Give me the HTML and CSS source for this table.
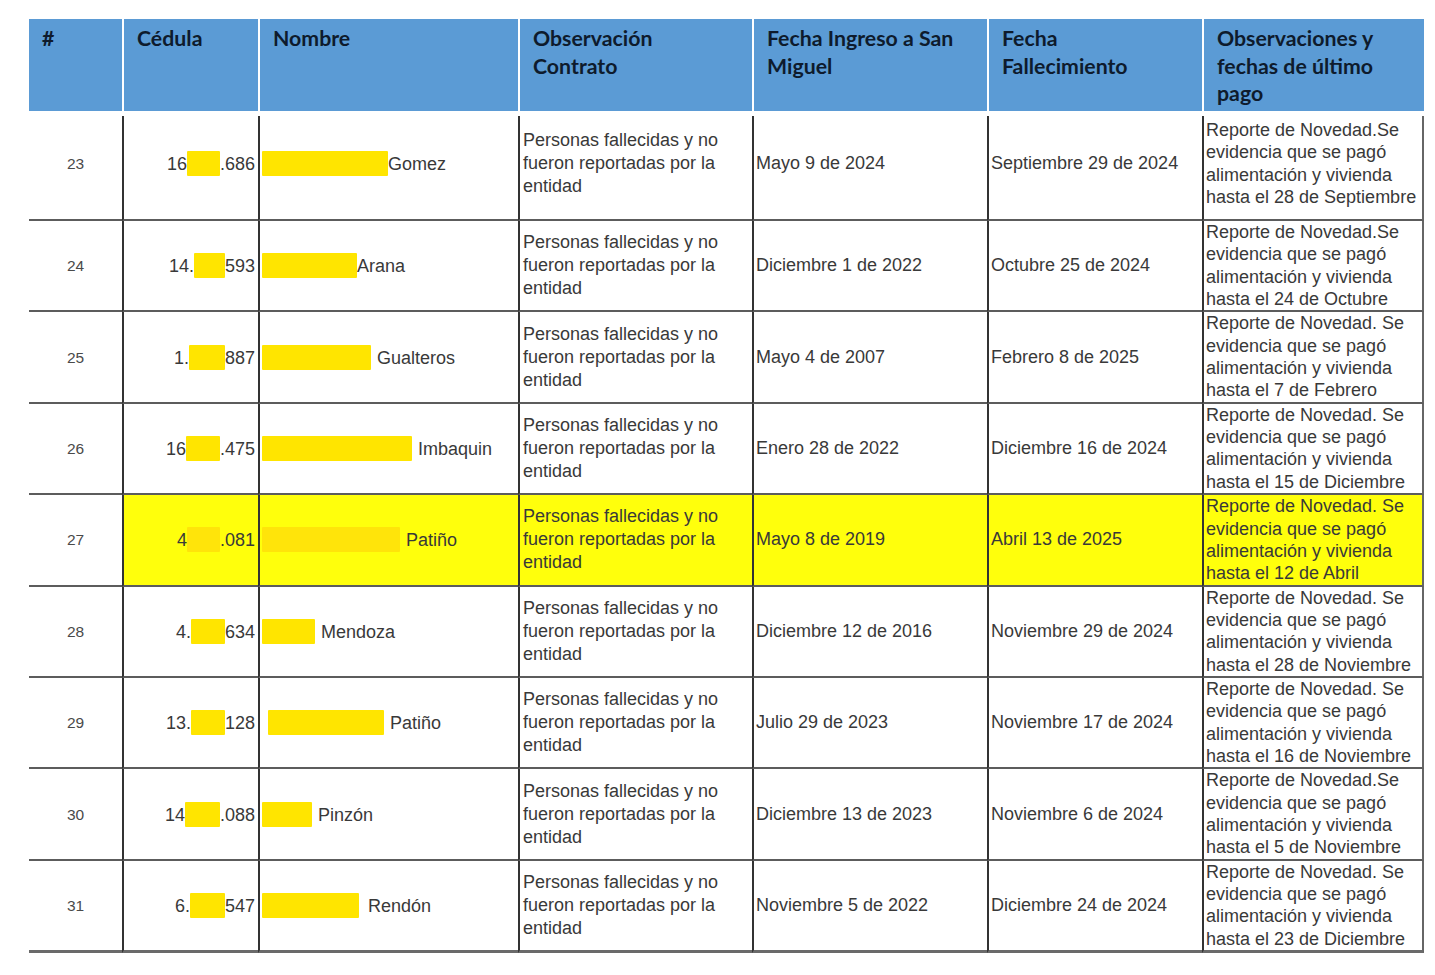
FILE: index.html
```html
<!DOCTYPE html>
<html lang="es">
<head>
    <meta charset="UTF-8">
    <title>Reporte de novedades</title>
    <link rel="stylesheet" href="styles.css">
</head>
<body>
<div class="reportPage">
    <table class="reportTable">
        <colgroup>
            <col class="colNum">
            <col class="colCedula">
            <col class="colNombre">
            <col class="colObs">
            <col class="colIngreso">
            <col class="colFallece">
            <col class="colNota">
        </colgroup>
        <thead>
        <tr>
            <th>#</th>
            <th>Cédula</th>
            <th>Nombre</th>
            <th>Observación<br>Contrato</th>
            <th>Fecha Ingreso a San<br>Miguel</th>
            <th>Fecha<br>Fallecimiento</th>
            <th>Observaciones y<br>fechas de último<br>pago</th>
        </tr>
        </thead>
        <tbody>
        <tr class="firstRow">
            <td class="num">23</td>
            <td class="cedula">16<span class="redact" style="width:33px"></span>.686</td>
            <td class="nombre"><span class="redact" style="width:126px"></span>Gomez</td>
            <td class="obs">Personas fallecidas y no<br>fueron reportadas por la<br>entidad</td>
            <td class="fecha">Mayo 9 de 2024</td>
            <td class="fecha">Septiembre 29 de 2024</td>
            <td class="nota">Reporte de Novedad.Se<br>evidencia que se pagó<br>alimentación y vivienda<br>hasta el 28 de Septiembre</td>
        </tr>
        <tr>
            <td class="num">24</td>
            <td class="cedula">14.<span class="redact" style="width:31px"></span>593</td>
            <td class="nombre"><span class="redact" style="width:95px"></span>Arana</td>
            <td class="obs">Personas fallecidas y no<br>fueron reportadas por la<br>entidad</td>
            <td class="fecha">Diciembre 1 de 2022</td>
            <td class="fecha">Octubre 25 de 2024</td>
            <td class="nota">Reporte de Novedad.Se<br>evidencia que se pagó<br>alimentación y vivienda<br>hasta el 24 de Octubre</td>
        </tr>
        <tr>
            <td class="num">25</td>
            <td class="cedula">1.<span class="redact" style="width:36px"></span>887</td>
            <td class="nombre"><span class="redact gap" style="width:109px"></span>Gualteros</td>
            <td class="obs">Personas fallecidas y no<br>fueron reportadas por la<br>entidad</td>
            <td class="fecha">Mayo 4 de 2007</td>
            <td class="fecha">Febrero 8 de 2025</td>
            <td class="nota">Reporte de Novedad. Se<br>evidencia que se pagó<br>alimentación y vivienda<br>hasta el 7 de Febrero</td>
        </tr>
        <tr>
            <td class="num">26</td>
            <td class="cedula">16<span class="redact" style="width:34px"></span>.475</td>
            <td class="nombre"><span class="redact gap" style="width:150px"></span>Imbaquin</td>
            <td class="obs">Personas fallecidas y no<br>fueron reportadas por la<br>entidad</td>
            <td class="fecha">Enero 28 de 2022</td>
            <td class="fecha">Diciembre 16 de 2024</td>
            <td class="nota">Reporte de Novedad. Se<br>evidencia que se pagó<br>alimentación y vivienda<br>hasta el 15 de Diciembre</td>
        </tr>
        <tr class="marked">
            <td class="num">27</td>
            <td class="cedula">4<span class="redact" style="width:33px"></span>.081</td>
            <td class="nombre"><span class="redact gap" style="width:138px"></span>Patiño</td>
            <td class="obs">Personas fallecidas y no<br>fueron reportadas por la<br>entidad</td>
            <td class="fecha">Mayo 8 de 2019</td>
            <td class="fecha">Abril 13 de 2025</td>
            <td class="nota">Reporte de Novedad. Se<br>evidencia que se pagó<br>alimentación y vivienda<br>hasta el 12 de Abril</td>
        </tr>
        <tr>
            <td class="num">28</td>
            <td class="cedula">4.<span class="redact" style="width:34px"></span>634</td>
            <td class="nombre"><span class="redact gap" style="width:53px"></span>Mendoza</td>
            <td class="obs">Personas fallecidas y no<br>fueron reportadas por la<br>entidad</td>
            <td class="fecha">Diciembre 12 de 2016</td>
            <td class="fecha">Noviembre 29 de 2024</td>
            <td class="nota">Reporte de Novedad. Se<br>evidencia que se pagó<br>alimentación y vivienda<br>hasta el 28 de Noviembre</td>
        </tr>
        <tr>
            <td class="num">29</td>
            <td class="cedula">13.<span class="redact" style="width:34px"></span>128</td>
            <td class="nombre"><span class="redact gap indent" style="width:116px"></span>Patiño</td>
            <td class="obs">Personas fallecidas y no<br>fueron reportadas por la<br>entidad</td>
            <td class="fecha">Julio 29 de 2023</td>
            <td class="fecha">Noviembre 17 de 2024</td>
            <td class="nota">Reporte de Novedad. Se<br>evidencia que se pagó<br>alimentación y vivienda<br>hasta el 16 de Noviembre</td>
        </tr>
        <tr>
            <td class="num">30</td>
            <td class="cedula">14<span class="redact" style="width:35px"></span>.088</td>
            <td class="nombre"><span class="redact gap" style="width:50px"></span>Pinzón</td>
            <td class="obs">Personas fallecidas y no<br>fueron reportadas por la<br>entidad</td>
            <td class="fecha">Diciembre 13 de 2023</td>
            <td class="fecha">Noviembre 6 de 2024</td>
            <td class="nota">Reporte de Novedad.Se<br>evidencia que se pagó<br>alimentación y vivienda<br>hasta el 5 de Noviembre</td>
        </tr>
        <tr class="lastRow">
            <td class="num">31</td>
            <td class="cedula">6.<span class="redact" style="width:35px"></span>547</td>
            <td class="nombre"><span class="redact gap wide" style="width:97px"></span>Rendón</td>
            <td class="obs">Personas fallecidas y no<br>fueron reportadas por la<br>entidad</td>
            <td class="fecha">Noviembre 5 de 2022</td>
            <td class="fecha">Diciembre 24 de 2024</td>
            <td class="nota">Reporte de Novedad. Se<br>evidencia que se pagó<br>alimentación y vivienda<br>hasta el 23 de Diciembre</td>
        </tr>
        </tbody>
    </table>
</div>
</body>
</html>
```

FILE: styles.css
```css
body,html{
    padding: 0;
    margin: 0;
    background: #fff;
}
.reportPage{
    padding: 19px 0 0 29px;
}
.reportTable{
    table-layout: fixed;
    width: 1395px;
    border-collapse: separate;
    border-spacing: 0;
    font-family: "Liberation Sans", Arial, sans-serif;
    color: #393939;
}
.colNum{ width: 93px; }
.colCedula{ width: 136px; }
.colNombre{ width: 260px; }
.colObs{ width: 234px; }
.colIngreso{ width: 235px; }
.colFallece{ width: 215px; }
.colNota{ width: 222px; }

/* cabecera azul */
.reportTable th{
    height: 97px;
    box-sizing: border-box;
    padding: 6px 8px 0 13px;
    background: #5b9bd5;
    border-bottom: 5px solid #fff;
    color: #0e1b2d;
    font-family: Lato, "Open Sans", sans-serif;
    font-size: 21.3px;
    font-weight: 700;
    line-height: 27.5px;
    text-align: left;
    vertical-align: top;
    white-space: nowrap;
}
.reportTable th + th{
    border-left: 2px solid #fff;
}

/* filas */
.reportTable tbody tr{
    height: 91.4px;
}
.reportTable tbody tr.firstRow{
    height: 105px;
}
.reportTable td{
    padding: 0 2px;
    border-bottom: 2px solid #5c5c5c;
    font-size: 18px;
    line-height: 23px;
    vertical-align: middle;
    white-space: nowrap;
}
.reportTable td + td{
    border-left: 2px solid #333;
}
.reportTable td:last-child{
    border-right: 2px solid #666;
}
.reportTable tr.firstRow td{
    padding-bottom: 8px;
}
.reportTable tr.lastRow td{
    border-bottom: 3px solid #6a6a6a;
}
.reportTable tr.marked td + td{
    background: #ffff0c;
}
.reportTable td.num{
    text-align: center;
    font-size: 15.5px;
    color: #4a4a4a;
}
.reportTable td.cedula{
    text-align: right;
    padding-right: 3px;
}
.reportTable td.nombre{
    padding-left: 2px;
}
.reportTable td.obs{
    padding-left: 3px;
}
.reportTable td.nota{
    line-height: 22.3px;
}

/* tachado amarillo */
.redact{
    display: inline-block;
    height: 25px;
    vertical-align: -6px;
    background: #ffe500;
    border-radius: 1px;
}
.marked .redact{
    background: #ffe40a;
}
.redact.gap{
    margin-right: 6px;
}
.redact.wide{
    margin-right: 9px;
}
.redact.indent{
    margin-left: 6px;
}
```
